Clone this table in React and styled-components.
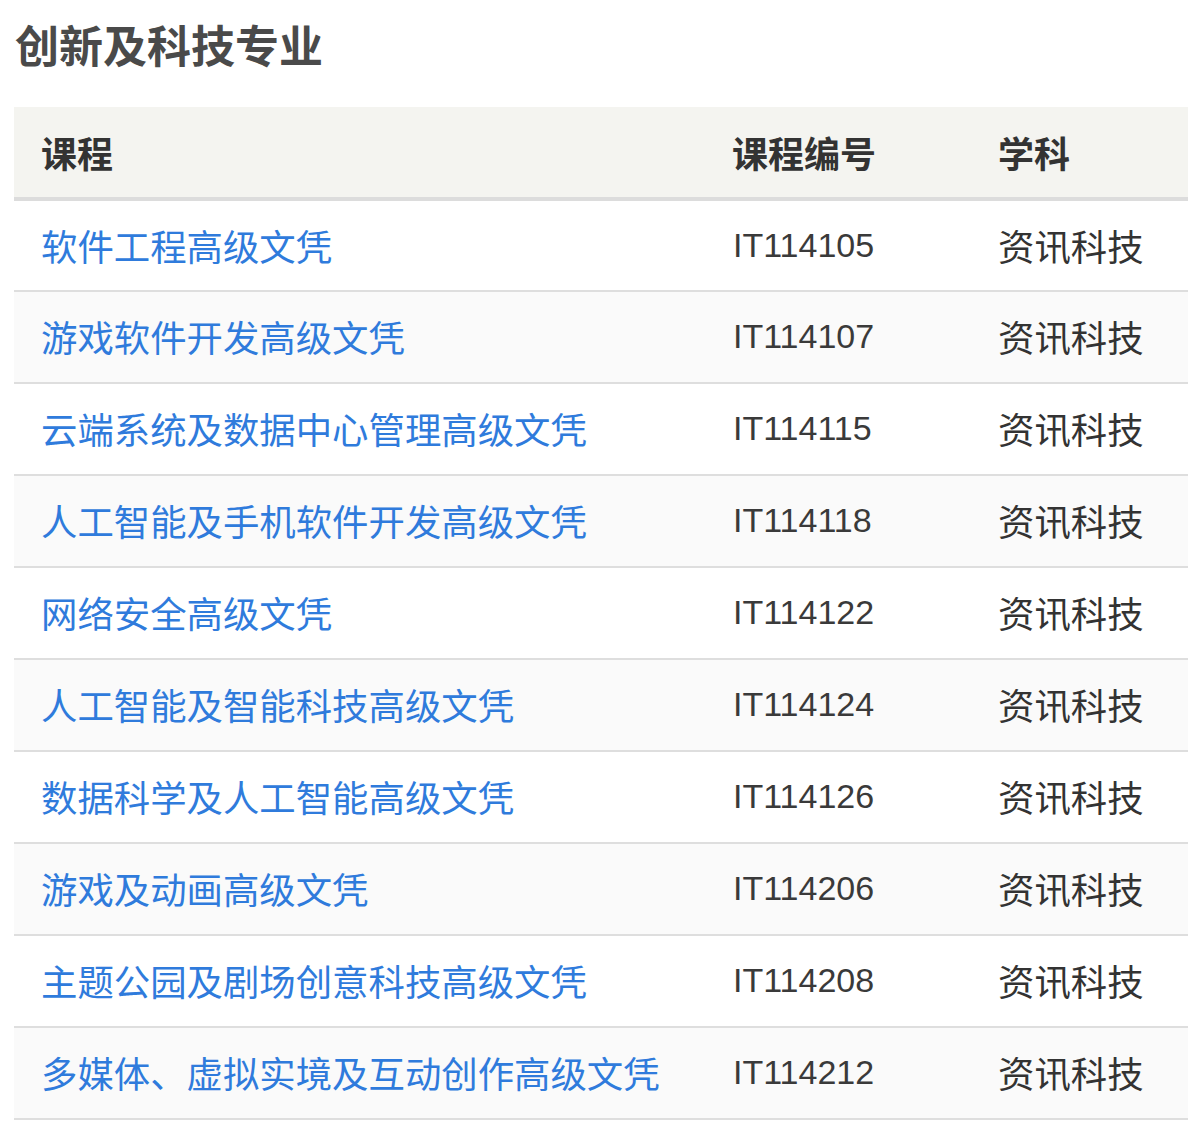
import React from 'react';
import styled, { createGlobalStyle } from 'styled-components';

const GlobalStyle = createGlobalStyle`
  body {
    margin: 0;
    background: #fff;
    font-family: "Liberation Sans", "Noto Sans CJK SC", sans-serif;
  }
`;

const Page = styled.div`
  padding: 14px 14px 0 14px;
`;

const Title = styled.h2`
  margin: 0 0 33px 1px;
  font-family: "Noto Sans CJK SC", sans-serif;
  font-size: 44px;
  font-weight: 700;
  line-height: 60px;
  color: #4a4a4a;
`;

const Table = styled.table`
  width: 100%;
  border-collapse: collapse;
  table-layout: fixed;
`;

const HeadCell = styled.th`
  width: ${(p) => p.width}px;
  height: 92px;
  padding: 0 27px;
  box-sizing: border-box;
  background: #f4f4f0;
  border-bottom: 4px solid #dcdcdc;
  text-align: left;
  font-family: "Noto Sans CJK SC", sans-serif;
  font-size: 36px;
  font-weight: 700;
  color: #333;
`;

const Row = styled.tr`
  background: ${(p) => (p.striped ? '#fafafa' : '#fff')};
  border-bottom: 2px solid #dedede;
`;

const Cell = styled.td`
  height: 92px;
  padding: 0 27px 2px;
  box-sizing: border-box;
  font-size: 36.4px;
  color: #333;
  white-space: nowrap;
`;

const CourseLink = styled.a`
  font-family: "Noto Sans CJK SC", sans-serif;
  color: #2f7bdc;
  text-decoration: none;
`;

const Code = styled.span`
  font-family: "Liberation Sans", sans-serif;
  font-size: 34px;
  color: #3a3a3a;
  padding-left: 1px;
`;

const Subject = styled.span`
  font-family: "Noto Sans CJK SC", sans-serif;
`;

const courses = [
  ['软件工程高级文凭', 'IT114105'],
  ['游戏软件开发高级文凭', 'IT114107'],
  ['云端系统及数据中心管理高级文凭', 'IT114115'],
  ['人工智能及手机软件开发高级文凭', 'IT114118'],
  ['网络安全高级文凭', 'IT114122'],
  ['人工智能及智能科技高级文凭', 'IT114124'],
  ['数据科学及人工智能高级文凭', 'IT114126'],
  ['游戏及动画高级文凭', 'IT114206'],
  ['主题公园及剧场创意科技高级文凭', 'IT114208'],
  ['多媒体、虚拟实境及互动创作高级文凭', 'IT114212'],
];

export default function App() {
  return (
    <Page>
      <GlobalStyle />
      <Title>创新及科技专业</Title>
      <Table>
        <thead>
          <tr>
            <HeadCell width={691}>课程</HeadCell>
            <HeadCell width={266}>课程编号</HeadCell>
            <HeadCell width={217}>学科</HeadCell>
          </tr>
        </thead>
        <tbody>
          {courses.map(([name, code], i) => (
            <Row key={code} striped={i % 2 === 1}>
              <Cell>
                <CourseLink href="#">{name}</CourseLink>
              </Cell>
              <Cell>
                <Code>{code}</Code>
              </Cell>
              <Cell>
                <Subject>资讯科技</Subject>
              </Cell>
            </Row>
          ))}
        </tbody>
      </Table>
    </Page>
  );
}
